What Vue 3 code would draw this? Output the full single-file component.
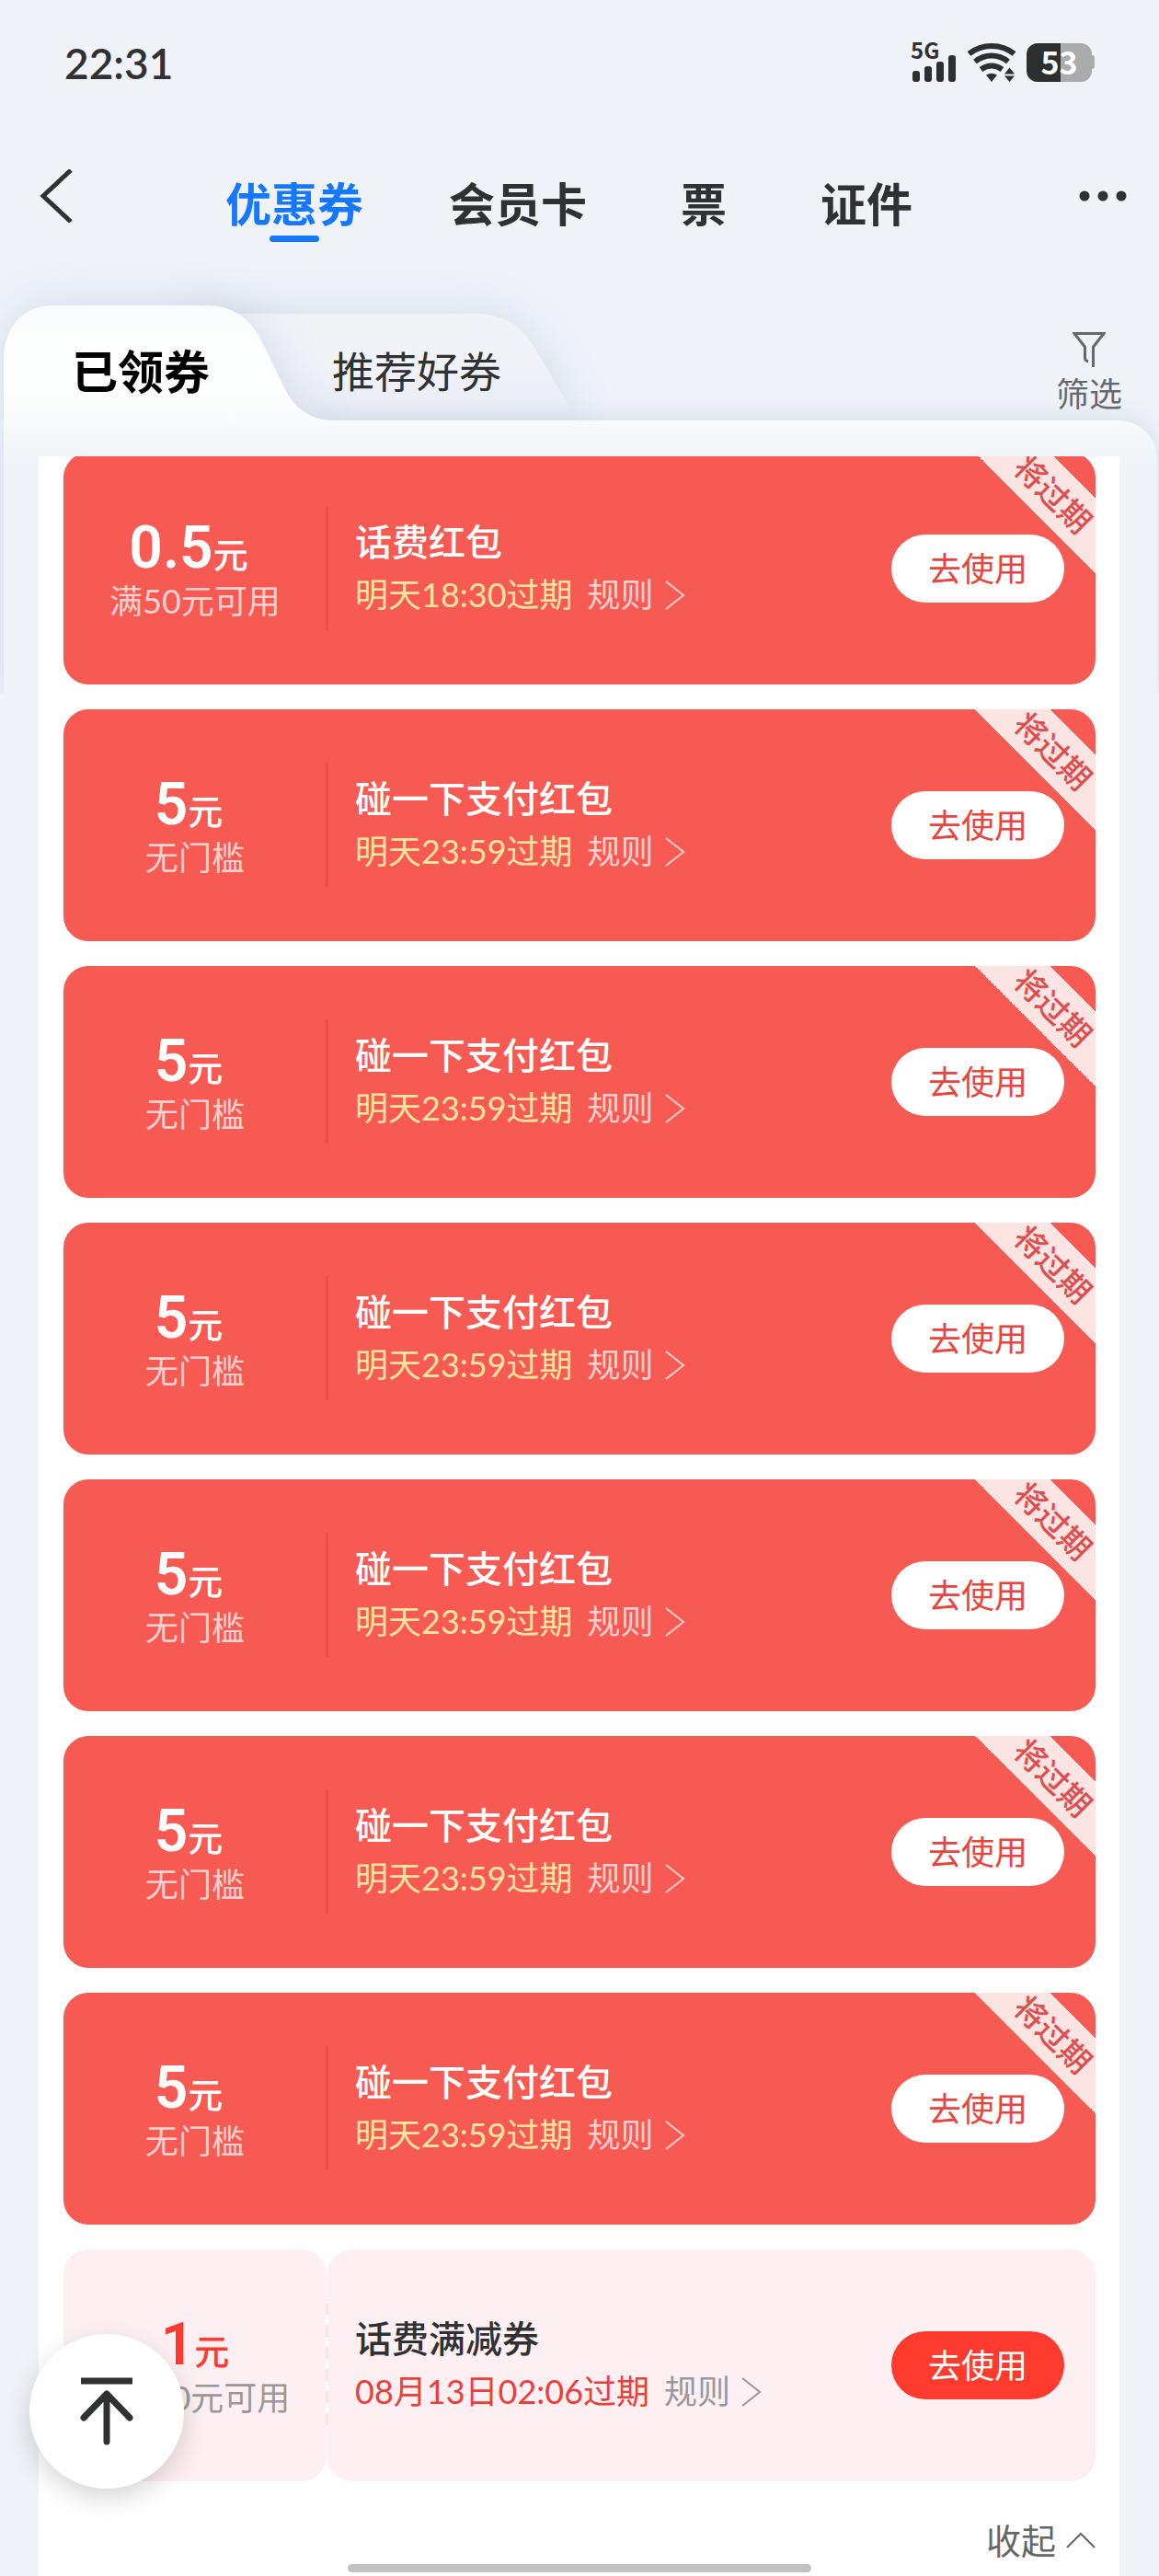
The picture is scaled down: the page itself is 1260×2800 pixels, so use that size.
<script setup>
import { ref } from 'vue'

const sections = ['优惠券', '会员卡', '票', '证件']
const activeSection = ref('优惠券')

const bump = (id) => ({
  id,
  amount: '5',
  limit: '无门槛',
  title: '碰一下支付红包',
  expiry: '明天23:59过期',
  kind: 'packet',
  soon: true,
})

const coupons = [
  { id: 1, amount: '0.5', limit: '满50元可用', title: '话费红包', expiry: '明天18:30过期', kind: 'packet', soon: true },
  bump(2),
  bump(3),
  bump(4),
  bump(5),
  bump(6),
  bump(7),
  { id: 8, amount: '1', limit: '满100元可用', title: '话费满减券', expiry: '08月13日02:06过期', kind: 'voucher', soon: false },
]

const toTop = () => window.scrollTo({ top: 0, behavior: 'smooth' })
</script>

<template>
  <div class="page">
    <div class="status">
      <time class="clock">22:31</time>
      <div class="indicators">
        <div class="signal">
          <span class="network">5G</span>
          <svg width="50" height="42" viewBox="0 0 50 42" fill="#2e3030" aria-hidden="true">
            <rect x="2" y="30" width="8" height="12" rx="3" />
            <rect x="15" y="25" width="8" height="17" rx="3" />
            <rect x="28" y="20" width="8" height="22" rx="3" />
            <rect x="41" y="13" width="8" height="29" rx="3" />
          </svg>
        </div>
        <svg width="52" height="42" viewBox="0 0 52 42" aria-hidden="true">
          <g fill="none" stroke="#2e3030" stroke-width="6">
            <path d="M1.500 11.500Q12 3 26 3t24.500 8.500" />
            <path d="M8 20Q16 13.500 26 13.500t18 6.500" />
            <path d="M14.500 28.500Q20 24.500 26 24.500T37.500 28.500" />
          </g>
          <path d="M20 34.500q6-3.500 12 0l-6 7.500zM40 33.500l5.500-7 5.500 7zM40 35.500h11l-5.500 6.500z" fill="#2e3030" />
        </svg>
        <div class="battery">53</div>
      </div>
    </div>

    <header class="header">
      <button class="back" aria-label="返回">
        <svg width="36" height="58" viewBox="0 0 36 58" fill="none" stroke="#303133" stroke-width="5">
          <path d="M34 1 4 29l30 28" />
        </svg>
      </button>
      <nav class="sections">
        <button
          v-for="name in sections"
          :key="name"
          class="section"
          :class="{ active: name === activeSection }"
          @click="activeSection = name"
        >
          {{ name }}
        </button>
      </nav>
      <button class="more" aria-label="更多">
        <svg width="54" height="58" viewBox="0 0 54 58" fill="#303133">
          <circle cx="7" cy="29" r="5.500" />
          <circle cx="27" cy="29" r="5.500" />
          <circle cx="47" cy="29" r="5.500" />
        </svg>
      </button>
    </header>

    <section class="folder">
      <svg class="shape" width="640" height="137" viewBox="0 0 640 137" aria-hidden="true">
        <defs>
          <linearGradient id="rear" x1="0" y1="0" x2="0" y2="1">
            <stop offset="0" stop-color="#f0f4f7" />
            <stop offset=".5" stop-color="#eff2f7" />
            <stop offset="1" stop-color="#e8ecf3" />
          </linearGradient>
        </defs>
        <path d="M200 21H515C548 21 568 34 583 61L628 137H200Z" fill="url(#rear)" />
      </svg>
      <div class="sheet"></div>
      <svg class="shape" width="640" height="137" viewBox="0 0 640 137" aria-hidden="true">
        <defs>
          <linearGradient id="front" x1="0" y1="0" x2="0" y2="1">
            <stop offset="0" stop-color="#f8fafc" />
            <stop offset=".3" stop-color="#fdfefe" />
            <stop offset=".7" stop-color="#fdfefe" />
            <stop offset="1" stop-color="#f8fafb" />
          </linearGradient>
        </defs>
        <path d="M4 138V72C4 36 24 12 58 12H225C253 12 272 26 284 50L309 101C320 125 339 137 364 137V138Z" fill="url(#front)" />
      </svg>
      <div class="folder-tabs">
        <button class="folder-tab current">已领券</button>
        <button class="folder-tab">推荐好券</button>
        <button class="filter">
          <svg width="36" height="40" viewBox="0 0 36 40" fill="none" stroke="#66686c" stroke-width="3">
            <path d="M22.500 39V17L34 2.500H2L13.500 17V29q0 3 3.500 4" />
          </svg>
          筛选
        </button>
      </div>
    </section>

    <main class="panel">
      <ul class="coupons">
        <li v-for="c in coupons" :key="c.id" class="coupon" :class="c.kind">
          <div class="value">
            <p class="amount">{{ c.amount }}<span class="unit">元</span></p>
            <p class="limit">{{ c.limit }}</p>
          </div>
          <div class="detail">
            <div class="info">
              <h2 class="title">{{ c.title }}</h2>
              <p class="meta">
                <span class="expiry">{{ c.expiry }}</span>
                <a class="rules" href="#">
                  规则
                  <svg width="22" height="32" viewBox="0 0 22 32" fill="none" stroke="currentColor" stroke-width="2">
                    <path d="M1 1l19 15L1 31" />
                  </svg>
                </a>
              </p>
            </div>
            <button class="use">去使用</button>
          </div>
          <div v-if="c.soon" class="ribbon"><span class="ribbon-text">将过期</span></div>
        </li>
      </ul>
      <div class="footer">
        <button class="collapse">
          收起
          <svg width="32" height="18" viewBox="0 0 32 18" fill="none" stroke="#666" stroke-width="2">
            <path d="M1 17 16 2l15 15" />
          </svg>
        </button>
      </div>
    </main>

    <button class="to-top" aria-label="回到顶部" @click="toTop">
      <svg width="58" height="74" viewBox="0 0 58 74" fill="none" stroke="#303133" stroke-width="7">
        <path d="M1 4h56" />
        <path d="M29 70V19M4 44l25-26 25 26" stroke-linecap="round" stroke-linejoin="round" />
      </svg>
    </button>
    <div class="home-bar"></div>
  </div>
</template>

<style>
body {
  margin: 0;
  background: #eff3f8;
}
</style>

<style scoped>
.page {
  min-height: 100vh;
  display: flex;
  flex-direction: column;
  background: #eff3f8;
  color: #303133;
  font-family: Lato, "Noto Sans CJK SC", sans-serif;
}

button {
  margin: 0;
  padding: 0;
  border: 0;
  background: none;
  color: inherit;
  font: inherit;
  cursor: pointer;
}

svg {
  display: block;
  flex: none;
}

h2,
p,
ul {
  margin: 0;
  padding: 0;
  list-style: none;
  font-weight: 400;
}

.status {
  display: flex;
  align-items: center;
  justify-content: space-between;
  height: 136px;
  padding: 0 70px;
}

.clock {
  font-size: 46px;
  font-weight: 600;
}

.indicators {
  display: flex;
  align-items: center;
  gap: 12px;
  font-family: "Noto Sans CJK SC", sans-serif;
}

.signal {
  position: relative;
}

.network {
  position: absolute;
  top: -2px;
  left: 0;
  font-size: 24px;
  font-weight: 700;
  line-height: 18px;
}

.battery {
  position: relative;
  width: 71px;
  height: 42px;
  margin-right: 3px;
  border-radius: 12px;
  background: linear-gradient(90deg, #2e3030 52%, #aaabad 52%);
  color: #fff;
  font-size: 34px;
  font-weight: 700;
  line-height: 40px;
  text-align: center;
}

.battery::after {
  content: "";
  position: absolute;
  top: 13px;
  right: -3px;
  width: 3px;
  height: 15px;
  border-radius: 0 3px 3px 0;
  background: #aaabad;
}

.header {
  display: flex;
  align-items: flex-start;
  height: 136px;
  padding: 48px 34px 0 43px;
}

.sections {
  flex: 1;
  display: flex;
  padding: 8px 0 0 124px;
}

.section {
  position: relative;
  padding: 0 51px;
  font-size: 50px;
  font-weight: 700;
  line-height: 60px;
}

.section.active {
  padding: 0 42px;
  color: #1677ff;
}

.section.active::after {
  content: "";
  position: absolute;
  top: 64px;
  left: 50%;
  width: 54px;
  height: 7px;
  margin-left: -27px;
  border-radius: 4px;
  background: #1677ff;
}

.folder {
  position: relative;
  height: 176px;
  padding-top: 48px;
  box-sizing: border-box;
}

.shape {
  position: absolute;
  top: 0;
  left: 0;
  overflow: visible;
  filter: drop-shadow(0 0 24px rgba(170, 182, 212, 0.4));
  clip-path: inset(-60px -60px 0 -10px);
}

.sheet {
  position: absolute;
  top: 137px;
  left: 4px;
  right: 2px;
  height: 296px;
  border-radius: 0 42px 0 0;
  background: linear-gradient(#f8fafb, #eff3f8 60px);
  box-shadow: 0 0 28px rgba(170, 182, 212, 0.4);
  clip-path: inset(-60px -10px 0 -10px);
}

.folder-tabs {
  position: relative;
  display: flex;
  align-items: flex-start;
  padding: 0 40px 0 78px;
}

.folder-tab {
  margin-right: 133px;
  padding-top: 2px;
  font-size: 46px;
  line-height: 68px;
}

.folder-tab.current {
  color: #000;
  font-size: 50px;
  font-weight: 700;
}

.filter {
  display: flex;
  flex-direction: column;
  align-items: center;
  gap: 4px;
  margin: -8px 0 0 auto;
  color: #66686c;
  font-size: 36px;
  line-height: 48px;
}

.panel {
  position: relative;
  flex: 1;
  margin: 0 43px 0 42px;
  padding: 0 26px 0 27px;
  background: #fff;
  overflow: hidden;
}

.coupons {
  display: flex;
  flex-direction: column;
  gap: 27px;
  margin-top: -4px;
}

.coupon {
  position: relative;
  display: flex;
  height: 252px;
  border-radius: 27px;
}

.packet {
  background: #f75a53;
  color: #fff;
}

.value,
.detail {
  display: flex;
  border-radius: 27px;
}

.value {
  flex: none;
  flex-direction: column;
  justify-content: center;
  width: 286px;
  padding-top: 4px;
  box-sizing: border-box;
  text-align: center;
}

.detail {
  position: relative;
  flex: 1;
  align-items: center;
  justify-content: space-between;
  margin-left: 1px;
  padding: 0 34px 0 30px;
}

.detail::before {
  content: "";
  position: absolute;
  top: 58px;
  left: -2px;
  width: 3px;
  height: 135px;
  background: #ee4e48;
}

.amount {
  padding-right: 14px;
  font-family: Roboto, "Noto Sans CJK SC", sans-serif;
  font-size: 64px;
  font-weight: 600;
  line-height: 66px;
}

.unit {
  font-family: "Noto Sans CJK SC", sans-serif;
  font-size: 38px;
  font-weight: 500;
  line-height: 48px;
}

.limit {
  color: #ffd0cf;
  font-size: 36px;
  line-height: 48px;
}

.title {
  font-size: 40px;
  font-weight: 500;
  line-height: 57px;
}

.meta {
  display: flex;
  gap: 16px;
  font-size: 36px;
  line-height: 57px;
}

.expiry {
  color: #ffe4a0;
}

.rules {
  display: flex;
  align-items: center;
  gap: 12px;
  color: #ffd0cf;
  text-decoration: none;
}

.use {
  width: 188px;
  height: 74px;
  border-radius: 37px;
  background: #fff;
  color: #e8453e;
  font-size: 36px;
  line-height: 74px;
}

.ribbon {
  position: absolute;
  top: 0;
  right: 0;
  width: 131px;
  height: 131px;
  border-top-right-radius: 27px;
  background: linear-gradient(45deg, transparent 50%, #fce4e2 50%, #fce4e2 81%, transparent 81%);
}

.ribbon-text {
  position: absolute;
  top: 28px;
  right: -5px;
  color: #dd4f50;
  font-size: 34px;
  font-weight: 500;
  line-height: 34px;
  white-space: nowrap;
  transform: rotate(45deg);
}

.voucher .value,
.voucher .detail {
  background: #fef0f2;
}

.voucher .detail::before {
  background: repeating-linear-gradient(#fbe2e5 0 14px, #fff 14px 24px);
}

.voucher .amount {
  padding-right: 0;
  color: #ff3b30;
}

.voucher .title {
  color: #303133;
}

.voucher .expiry {
  color: #e8403a;
}

.voucher .limit,
.voucher .rules {
  color: #999;
}

.voucher .use {
  background: #ff3a2f;
  color: #fff;
}

.footer {
  display: flex;
  justify-content: flex-end;
  padding: 36px 0 12px;
}

.collapse {
  display: flex;
  align-items: center;
  gap: 11px;
  color: #666;
  font-size: 38px;
  line-height: 56px;
}

.to-top {
  position: fixed;
  bottom: 95px;
  left: 32px;
  display: flex;
  align-items: center;
  justify-content: center;
  width: 168px;
  height: 168px;
  border-radius: 50%;
  background: #fff;
  box-shadow: 0 10px 28px rgba(0, 0, 0, 0.16);
}

.home-bar {
  position: fixed;
  bottom: 4px;
  left: 30%;
  right: 30%;
  height: 9px;
  border-radius: 5px;
  background: #c2c2c2;
}
</style>
